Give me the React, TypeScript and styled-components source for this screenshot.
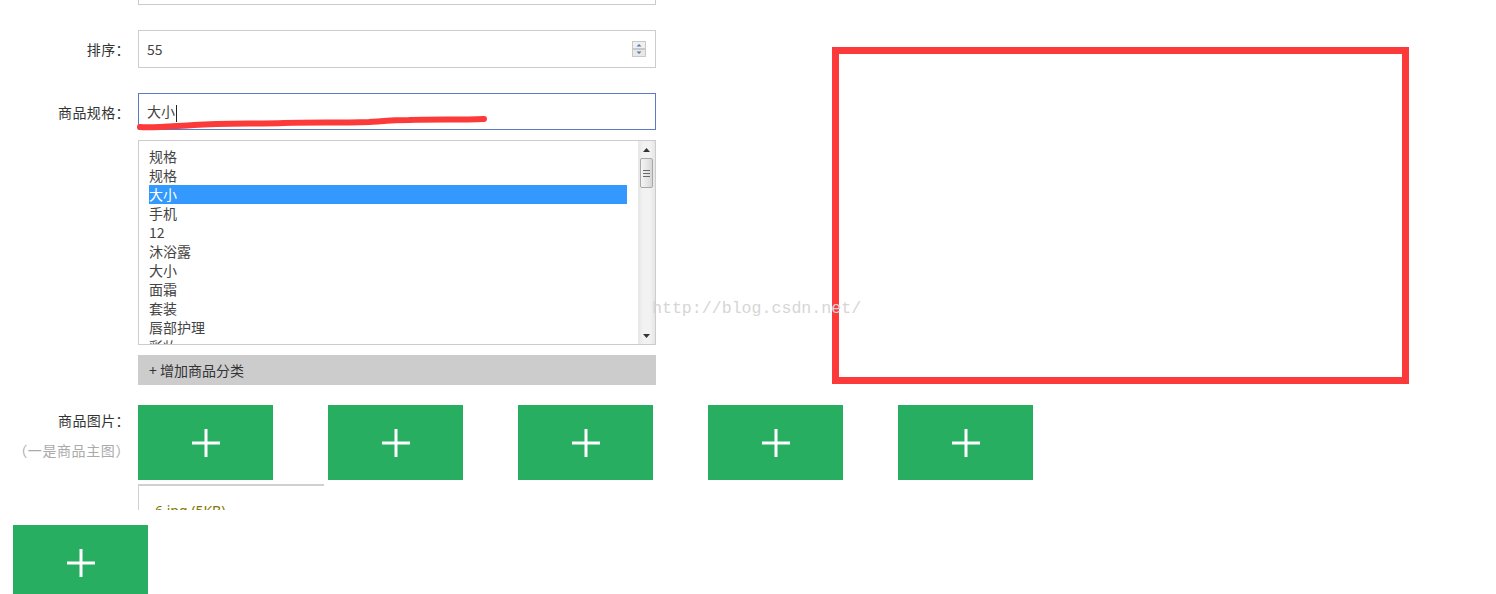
import React from 'react'
import styled, { createGlobalStyle } from 'styled-components'

const GlobalStyle = createGlobalStyle`
  html, body {
    margin: 0;
    padding: 0;
    background: #fff;
  }
  body {
    font-family: "Noto Sans CJK SC", "Noto Sans", sans-serif;
    color: #333;
  }
`

const Page = styled.div`
  position: relative;
  width: 1496px;
  height: 594px;
  overflow: hidden;
  background: #fff;
`

const Form = styled.div`
  display: flex;
  flex-direction: column;
  width: 656px;
`

const Row = styled.div<{ $top: number; $align?: string }>`
  display: flex;
  align-items: ${p => p.$align || 'center'};
  gap: 8px;
  margin-top: ${p => p.$top}px;
`

const Label = styled.div`
  width: 130px;
  flex-shrink: 0;
  text-align: right;
  font-size: 14px;
  color: #333;
  line-height: 20px;
  letter-spacing: 0.4px;
`

const LabelStack = styled.div`
  width: 130px;
  flex-shrink: 0;
  display: flex;
  flex-direction: column;
  align-items: flex-end;
  padding-top: 5px;
  gap: 10px;
`

const Hint = styled.div`
  font-size: 14px;
  color: #aaa;
  line-height: 20px;
  letter-spacing: 0.6px;
`

const Field = styled.div<{ $height: number; $focus?: boolean }>`
  box-sizing: border-box;
  width: 518px;
  height: ${p => p.$height}px;
  border: 1px solid ${p => (p.$focus ? '#5b7bc6' : '#cccccc')};
  display: flex;
  align-items: center;
  justify-content: space-between;
  padding: 0 9px 0 8px;
  font-size: 14px;
  color: #444;
`

const TopStub = styled.div`
  box-sizing: border-box;
  margin-left: 138px;
  width: 518px;
  height: 5px;
  border: 1px solid #cccccc;
  border-top: none;
`

const Caret = styled.span`
  display: inline-block;
  width: 1px;
  height: 17px;
  background: #222;
  vertical-align: middle;
  margin-left: 1px;
`

const ListBox = styled.div`
  box-sizing: border-box;
  margin-left: 138px;
  margin-top: 10px;
  width: 518px;
  height: 205px;
  border: 1px solid #cccccc;
  display: flex;
  overflow: hidden;
`

const Options = styled.div`
  flex: 1;
  padding: 6px 11px 0 10px;
  overflow: hidden;
`

const Option = styled.div<{ $selected?: boolean }>`
  height: 19px;
  line-height: 19px;
  font-size: 14px;
  color: ${p => (p.$selected ? '#fff' : '#444')};
  background: ${p => (p.$selected ? '#3399ff' : 'transparent')};
`

const Scrollbar = styled.div`
  width: 17px;
  flex-shrink: 0;
  background: linear-gradient(90deg, #e6e6e6 0%, #f2f2f2 30%, #f2f2f2 70%, #e6e6e6 100%);
  display: flex;
  flex-direction: column;
  align-items: center;
`

const ScrollArrow = styled.div`
  height: 17px;
  display: flex;
  align-items: center;
  justify-content: center;
`

const ScrollSpace = styled.div`
  flex: 1;
`

const Thumb = styled.div`
  box-sizing: border-box;
  width: 13px;
  height: 30px;
  border: 1px solid #a8a8a8;
  border-radius: 2px;
  background: linear-gradient(90deg, #f4f4f4 0%, #e4e4e4 60%, #d6d6d6 100%);
  display: flex;
  flex-direction: column;
  align-items: center;
  justify-content: center;
  gap: 2px;
`

const Grip = styled.div`
  width: 7px;
  height: 1px;
  background: #6a6a6a;
`

const AddBar = styled.div`
  box-sizing: border-box;
  margin-left: 138px;
  margin-top: 10px;
  width: 518px;
  height: 30px;
  background: #cccccc;
  padding-left: 11px;
  display: flex;
  align-items: center;
  font-size: 14px;
  color: #333;
`

const Tiles = styled.div`
  display: flex;
  gap: 55px;
`

const PlusTile = styled.div<{ $indent?: number }>`
  width: 135px;
  height: 75px;
  flex-shrink: 0;
  background: #27ae60;
  display: flex;
  align-items: center;
  justify-content: center;
  margin-left: ${p => p.$indent || 0}px;
`

const FileBox = styled.div`
  box-sizing: border-box;
  margin-left: 138px;
  margin-top: 4px;
  width: 186px;
  height: 26px;
  border-top: 2px solid #d0d0d0;
  border-left: 1px solid #d0d0d0;
  overflow: hidden;
  padding: 16px 0 0 16px;
  font-size: 14px;
  line-height: 18px;
  color: #7d7a00;
  font-family: "Noto Sans", "Noto Sans CJK SC", sans-serif;
`

const BottomTile = styled(PlusTile)`
  margin-top: 15px;
`

const Annotation = styled.div`
  position: absolute;
  left: 832px;
  top: 47px;
  width: 577px;
  height: 337px;
  box-sizing: border-box;
  border: 7px solid #fd3a3a;
`

const Watermark = styled.div`
  position: absolute;
  left: 652px;
  top: 299px;
  font-family: "Liberation Mono", "DejaVu Sans Mono", monospace;
  font-size: 16.6px;
  color: #d6d6d6;
  pointer-events: none;
`

const Scribble = styled.svg`
  position: absolute;
  left: 134px;
  top: 114px;
  pointer-events: none;
`

const Plus = () => (
  <svg width="28" height="28" viewBox="0 0 28 28">
    <rect x="12.5" y="0" width="3" height="28" fill="#fff" />
    <rect x="0" y="12.5" width="28" height="3" fill="#fff" />
  </svg>
)

const Spinner = () => (
  <svg width="14" height="16" viewBox="0 0 14 16">
    <rect x="0.5" y="0.5" width="13" height="7" fill="#f0f0f0" stroke="#c8c8c8" />
    <rect x="0.5" y="8.5" width="13" height="7" fill="#e8e8e8" stroke="#c8c8c8" />
    <path d="M4.5 5.5 L7 3 L9.5 5.5 Z" fill="#5a77b3" />
    <path d="M4.5 10.5 L7 13 L9.5 10.5 Z" fill="#5a77b3" />
  </svg>
)

const ArrowUp = () => (
  <svg width="7" height="4" viewBox="0 0 7 4">
    <path d="M0 4 L3.5 0 L7 4 Z" fill="#333" />
  </svg>
)

const ArrowDown = () => (
  <svg width="7" height="4" viewBox="0 0 7 4">
    <path d="M0 0 L3.5 4 L7 0 Z" fill="#333" />
  </svg>
)

const specs = ['规格', '规格', '大小', '手机', '12', '沐浴露', '大小', '面霜', '套装', '唇部护理', '彩妆']

export default function App() {
  return (
    <Page>
      <GlobalStyle />
      <Form>
        <TopStub />
        <Row $top={25}>
          <Label>排序：</Label>
          <Field $height={38}>
            <span>55</span>
            <Spinner />
          </Field>
        </Row>
        <Row $top={25}>
          <Label>商品规格：</Label>
          <Field $height={37} $focus>
            <span>
              大小
              <Caret />
            </span>
          </Field>
        </Row>
        <ListBox>
          <Options>
            {specs.map((s, i) => (
              <Option key={i} $selected={i === 2}>
                {s}
              </Option>
            ))}
          </Options>
          <Scrollbar>
            <ScrollArrow>
              <ArrowUp />
            </ScrollArrow>
            <Thumb>
              <Grip />
              <Grip />
              <Grip />
            </Thumb>
            <ScrollSpace />
            <ScrollArrow>
              <ArrowDown />
            </ScrollArrow>
          </Scrollbar>
        </ListBox>
        <AddBar>+ 增加商品分类</AddBar>
        <Row $top={20} $align="flex-start">
          <LabelStack>
            <Label>商品图片：</Label>
            <Hint>（一是商品主图）</Hint>
          </LabelStack>
          <Tiles>
            {[0, 1, 2, 3, 4].map(i => (
              <PlusTile key={i}>
                <Plus />
              </PlusTile>
            ))}
          </Tiles>
        </Row>
        <FileBox>6.jpg (5KB)</FileBox>
        <BottomTile $indent={13}>
          <Plus />
        </BottomTile>
      </Form>
      <Scribble width="360" height="20" viewBox="0 0 360 20">
        <path
          d="M6 13 C20 14 40 12 60 11 C90 9 120 10 150 9 C180 8 200 9 235 8 C250 7 260 6 275 6 C300 5 325 6 350 5"
          stroke="#fd3a3a"
          strokeWidth="6"
          strokeLinecap="round"
          fill="none"
        />
      </Scribble>
      <Annotation />
      <Watermark>http://blog.csdn.net/</Watermark>
    </Page>
  )
}
